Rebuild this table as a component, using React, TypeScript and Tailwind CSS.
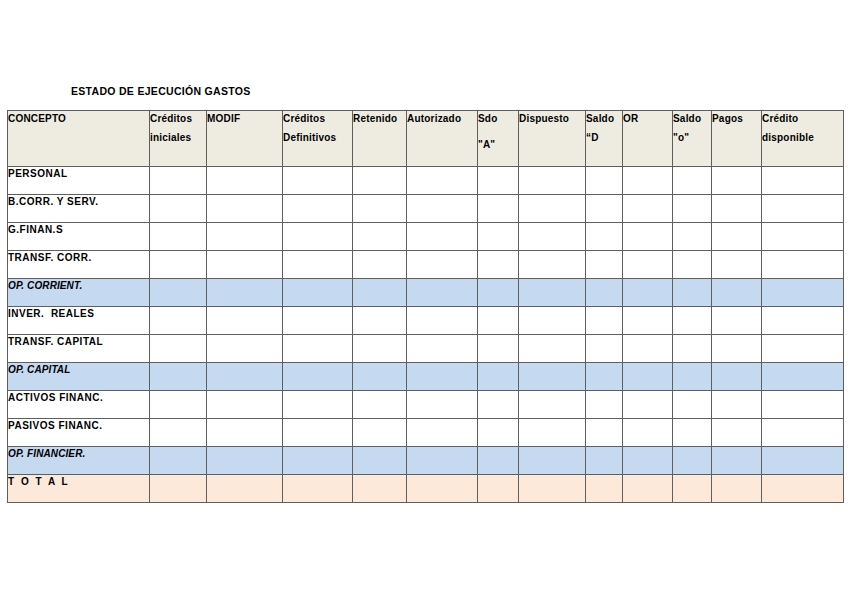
import React from "react";

type Row = { label: string; kind: "plain" | "sub" | "total" };

const rows: Row[] = [
  { label: "PERSONAL", kind: "plain" },
  { label: "B.CORR. Y SERV.", kind: "plain" },
  { label: "G.FINAN.S", kind: "plain" },
  { label: "TRANSF. CORR.", kind: "plain" },
  { label: "OP. CORRIENT.", kind: "sub" },
  { label: "INVER.  REALES", kind: "plain" },
  { label: "TRANSF. CAPITAL", kind: "plain" },
  { label: "OP. CAPITAL", kind: "sub" },
  { label: "ACTIVOS FINANC.", kind: "plain" },
  { label: "PASIVOS FINANC.", kind: "plain" },
  { label: "OP. FINANCIER.", kind: "sub" },
  { label: "T O T A L", kind: "total" },
];

// header cells: lines of text, second line optionally pushed down
const headers: { lines: string[]; low?: boolean }[] = [
  { lines: ["CONCEPTO"] },
  { lines: ["Créditos", "iniciales"] },
  { lines: ["MODIF"] },
  { lines: ["Créditos", "Definitivos"] },
  { lines: ["Retenido"] },
  { lines: ["Autorizado"] },
  { lines: ["Sdo", "\"A\""], low: true },
  { lines: ["Dispuesto"] },
  { lines: ["Saldo", "“D"] },
  { lines: ["OR"] },
  { lines: ["Saldo", "\"o\""] },
  { lines: ["Pagos"] },
  { lines: ["Crédito", "disponible"] },
];

const rowBg = {
  plain: "bg-white",
  sub: "bg-[#c5d9f1]",
  total: "bg-[#fde9d9]",
};

export default function App() {
  return (
    <div className="w-[848px] h-[599px] bg-white font-['Liberation_Sans',Arial,sans-serif] text-black">
      <div className="pt-[85px] pl-[71px] text-[10.5px] leading-[12px] font-bold tracking-[0.3px]">
        ESTADO DE EJECUCIÓN GASTOS
      </div>

      <div className="ml-[7px] mt-[13px] w-[837px] grid grid-cols-[141px_56px_75px_69px_53px_70px_40px_66px_36px_49px_38px_49px_81px] auto-rows-[27px] grid-rows-[55px] gap-px p-px bg-[#5f5f5f]">
        {headers.map((h, i) => (
          <div
            key={i}
            className="bg-[#eeece1] text-[10px] font-bold leading-[19px] tracking-[0.2px] whitespace-nowrap overflow-hidden"
          >
            <div className="-mt-[2px]">{h.lines[0]}</div>
            {h.lines[1] && (
              <div className={h.low ? "mt-[7px]" : ""}>{h.lines[1]}</div>
            )}
          </div>
        ))}

        {rows.map((r) => (
          <React.Fragment key={r.label}>
            <div
              className={`${rowBg[r.kind]} pt-px text-[10px] leading-[12px] font-bold whitespace-pre ${
                r.kind === "sub"
                  ? "italic tracking-[0.1px]"
                  : r.kind === "total"
                  ? "tracking-[2px]"
                  : "tracking-[0.5px]"
              }`}
            >
              {r.label}
            </div>
            {Array.from({ length: 12 }).map((_, j) => (
              <div key={j} className={rowBg[r.kind]} />
            ))}
          </React.Fragment>
        ))}
      </div>
    </div>
  );
}
